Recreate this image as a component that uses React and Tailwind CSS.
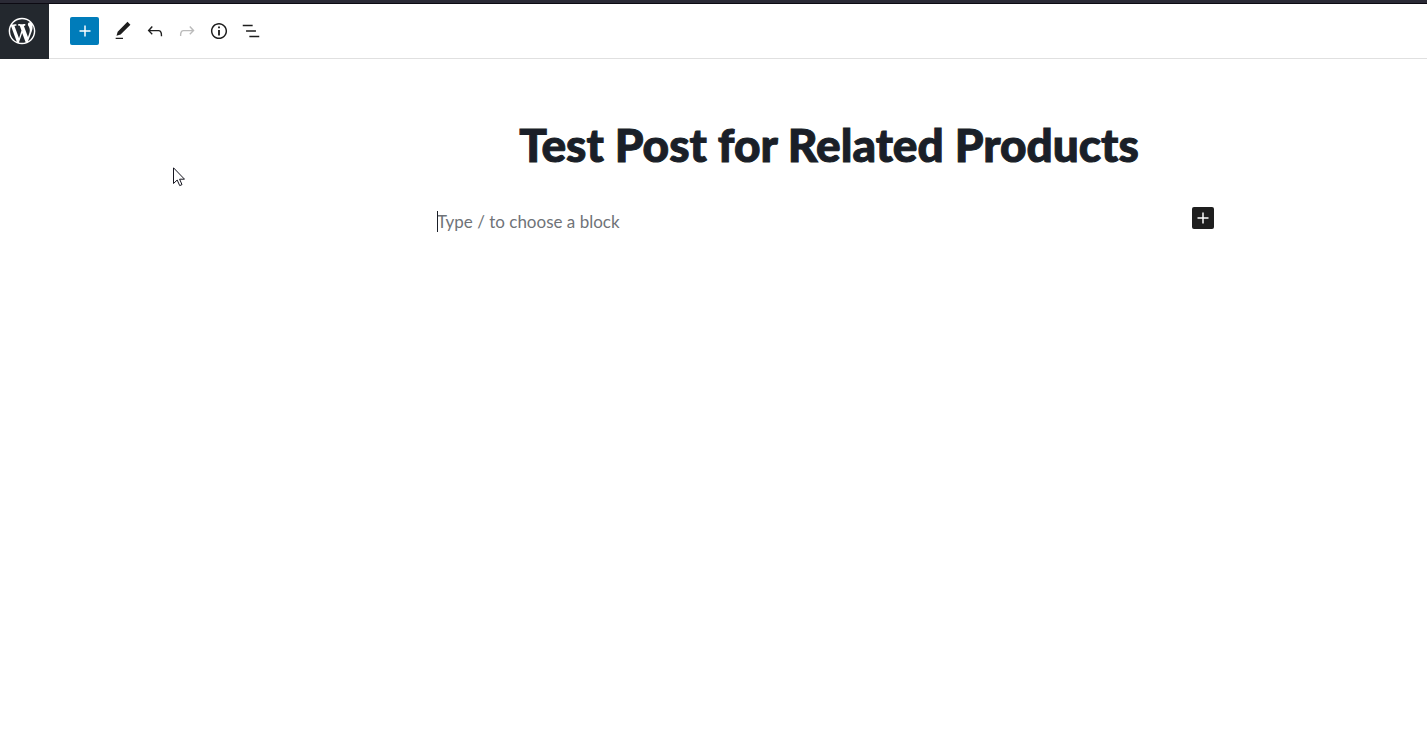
const icons = {
  wordpress:
    'M20 10c0-5.51-4.49-10-10-10C4.48 0 0 4.49 0 10c0 5.52 4.48 10 10 10 5.51 0 10-4.48 10-10zM7.78 15.37L4.37 6.22c.55-.02 1.17-.08 1.17-.08.5-.06.44-1.13-.06-1.11 0 0-1.45.11-2.37.11-.18 0-.37 0-.58-.01C4.12 2.69 6.87 1.11 10 1.11c2.33 0 4.45.87 6.05 2.34-.68-.11-1.65.39-1.65 1.58 0 .74.45 1.36.9 2.1.35.61.55 1.36.55 2.46 0 1.49-1.4 5-1.4 5l-3.03-8.37c.54-.02.82-.17.82-.17.5-.05.44-1.25-.06-1.22 0 0-1.44.12-2.38.12-.87 0-2.33-.12-2.33-.12-.5-.03-.56 1.2-.06 1.22l.92.08 1.26 3.41zM17.41 10c.24-.64.74-1.87.43-4.25.7 1.29 1.05 2.71 1.05 4.25 0 3.29-1.73 6.24-4.4 7.78.97-2.59 1.94-5.2 2.92-7.78zM6.1 18.09C3.12 16.65 1.11 13.53 1.11 10c0-1.3.23-2.48.72-3.59C3.25 10.3 4.67 14.2 6.1 18.09zm4.03-6.63l2.58 6.98c-.86.29-1.76.45-2.71.45-.79 0-1.57-.11-2.29-.33.81-2.38 1.62-4.74 2.42-7.1z',
  plus: 'M18 11.2h-5.2V6h-1.6v5.2H6v1.6h5.2V18h1.6v-5.2H18z',
  edit: 'M20.1 5.1L16.9 2 6.2 12.7l-1.3 4.4 4.5-1.3L20.1 5.1zM4 20.8h8v-1.5H4v1.5z',
  undo: 'M18.3 11.7c-.6-.6-1.4-.9-2.3-.9H6.7l2.9-3.3-1.1-1-4.5 5L8.5 16l1-1-2.7-2.7H16c.5 0 .9.2 1.3.5 1 1 1 3.4 1 4.5v.3h1.5v-.2c0-1.5 0-4.3-1.5-5.7z',
  redo: 'M15.6 6.5l-1.1 1 2.9 3.3H8c-.9 0-1.7.3-2.3.9-1.4 1.5-1.4 4.2-1.4 5.6v.2h1.5v-.3c0-1.1 0-3.5 1-4.5.3-.3.7-.5 1.3-.5h9.2L14.5 15l1.1 1.1 4.6-4.6-4.6-5z',
  info: 'M12 3.2c-4.8 0-8.8 3.9-8.8 8.8 0 4.8 3.9 8.8 8.8 8.8 4.8 0 8.8-3.9 8.8-8.8 0-4.8-4-8.8-8.8-8.8zm0 16c-4 0-7.2-3.3-7.2-7.2C4.8 8 8 4.8 12 4.8s7.2 3.3 7.2 7.2c0 4-3.2 7.2-7.2 7.2zM11 17h2v-6h-2v6zm0-8h2V7h-2v2z',
  outline: 'M13.8 5.2H3v1.5h10.8V5.2zm-3.6 12v1.5H21v-1.5H10.2zm7.2-6H6.6v1.5h10.8v-1.5z',
};

const tools = [
  { label: 'Tools', icon: icons.edit },
  { label: 'Undo', icon: icons.undo },
  { label: 'Redo', icon: icons.redo, disabled: true },
  { label: 'Details', icon: icons.info },
  { label: 'List View', icon: icons.outline },
];

function Icon({ path }) {
  return (
    <svg viewBox="0 0 24 24" className="size-[22px] shrink-0 fill-current" aria-hidden="true">
      <path d={path} />
    </svg>
  );
}

function Header() {
  return (
    <header className="flex h-[55px] bg-white">
      <a href="#posts" aria-label="View Posts" className="flex w-[49px] shrink-0 items-center bg-[#23282e] pb-px pl-[6px] text-white">
        <svg viewBox="-2 -2 24 24" className="size-8 fill-current" aria-hidden="true">
          <path d={icons.wordpress} />
        </svg>
      </a>
      <div className="flex flex-1 items-center gap-2 border-b border-[#e0e0e0] pl-[21px]">
        <button
          type="button"
          aria-label="Add block"
          className="flex h-7 w-[29px] items-center justify-center rounded-xs bg-[#007cba] text-white"
        >
          <Icon path={icons.plus} />
        </button>
        <div className="flex" role="toolbar" aria-label="Document tools">
          {tools.map((tool) => (
            <button
              key={tool.label}
              type="button"
              aria-label={tool.label}
              disabled={tool.disabled}
              className="flex size-8 items-center justify-center text-[#1e1e1e] disabled:text-[#bbbbbb]"
            >
              <Icon path={tool.icon} />
            </button>
          ))}
        </div>
      </div>
    </header>
  );
}

export default function App() {
  return (
    <div className="min-h-screen bg-white font-['Lato',sans-serif]">
      <div className="h-1 border-b border-[#0c0a12] bg-[#2a2a35]" />
      <Header />

      {/* Editor canvas */}
      <main className="pt-14 pl-[231px]">
        <div className="mx-auto max-w-[784px]">
          <h1
            contentEditable
            suppressContentEditableWarning
            className="text-center text-[46px] leading-[60px] font-black text-[#1a1f28] outline-none [-webkit-text-stroke:1px_#1a1f28]"
          >
            Test Post for Related Products
          </h1>
          <div className="relative mt-8 flex items-start justify-between pr-[7px]">
            <input
              type="text"
              aria-label="Empty block"
              placeholder="Type / to choose a block"
              className="h-7 min-w-0 flex-1 text-[17px] text-[#1a1f28] outline-none placeholder:text-[#6f7378]"
            />
            {/* text caret */}
            <span className="absolute top-1 left-0 h-[21px] w-px bg-[#1a1f28]" />
            <button
              type="button"
              aria-label="Add block"
              className="flex size-[22px] items-center justify-center rounded-xs bg-[#1e1e1e] text-white"
            >
              <Icon path={icons.plus} />
            </button>
          </div>
        </div>
      </main>

      {/* Mouse pointer */}
      <svg
        viewBox="0 0 12 20"
        className="pointer-events-none absolute top-[167px] left-[173px] h-5 w-3"
        aria-hidden="true"
      >
        <path
          d="M.5 .8V16.5L4.2 13L6.7 18.6L9 17.6L6.6 12.2H11.5Z"
          fill="#ffffff"
          stroke="#15151f"
          strokeWidth="1"
        />
      </svg>
    </div>
  );
}
